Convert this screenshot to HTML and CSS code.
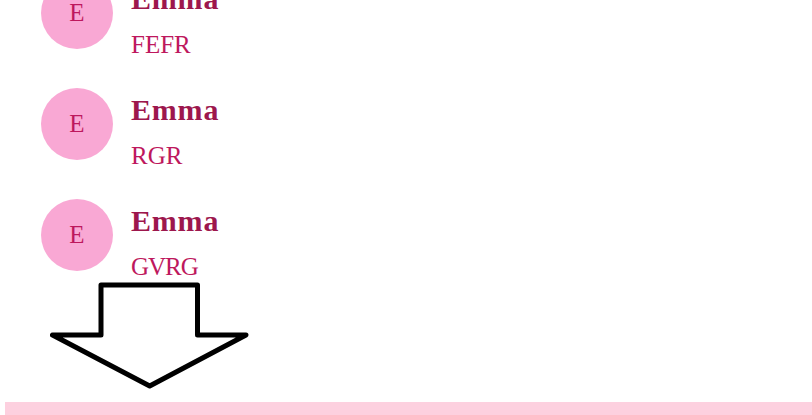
FILE: index.html
```html
<!DOCTYPE html>
<html lang="en">
<head>
    <meta charset="UTF-8">
    <meta name="viewport" content="width=device-width, initial-scale=1.0">
    <title>Messages</title>
    <link rel="stylesheet" href="styles.css">
</head>
<body>
    <div class="list">
        <div class="item">
            <div class="avatar">E</div>
            <div class="info">
                <h3 class="name">Emma</h3>
                <p class="msg">FEFR</p>
            </div>
        </div>
        <div class="item">
            <div class="avatar">E</div>
            <div class="info">
                <h3 class="name">Emma</h3>
                <p class="msg">RGR</p>
            </div>
        </div>
        <div class="item">
            <div class="avatar">E</div>
            <div class="info">
                <h3 class="name">Emma</h3>
                <p class="msg msg-tight">GVRG</p>
            </div>
        </div>
    </div>

    <svg class="arrow" width="200" height="108" viewBox="0 0 200 108">
        <path d="M51 4 H147.5 V54 H196 L99.7 105 L2.5 54 H51 Z" fill="#fff" stroke="#000" stroke-width="5" stroke-linejoin="round"/>
    </svg>

    <div class="footer"></div>
</body>
</html>
```

FILE: styles.css
```css
html, body {
    height: 100%;
}
body {
    font-family: 'Liberation Serif', serif;
    background-color: #fff;
    margin: 0;
    padding: 0;
    overflow: hidden;
    display: flex;
    flex-direction: column;
}
.list {
    margin-top: -23px;
    padding-left: 41px;
}
.item {
    display: flex;
    gap: 18px;
    height: 111px;
}
.avatar {
    width: 72px;
    height: 72px;
    border-radius: 50%;
    background-color: #f9a8d4;
    color: #be185d;
    font-size: 25px;
    display: flex;
    justify-content: center;
    align-items: center;
    flex-shrink: 0;
}
.name {
    margin: 6px 0 0;
    font-size: 30px;
    line-height: 32px;
    letter-spacing: 0.8px;
    font-weight: bold;
    color: #9d174d;
}
.msg {
    margin: 14px 0 0;
    font-size: 25px;
    line-height: 32px;
    color: #be185d;
}
.msg-tight {
    letter-spacing: -1px;
}
.arrow {
    display: block;
    margin: -29px 0 0 50px;
    flex-shrink: 0;
}
.footer {
    margin: 13px 0 0 5px;
    height: 13px;
    background-color: #fdd0df;
}
```
